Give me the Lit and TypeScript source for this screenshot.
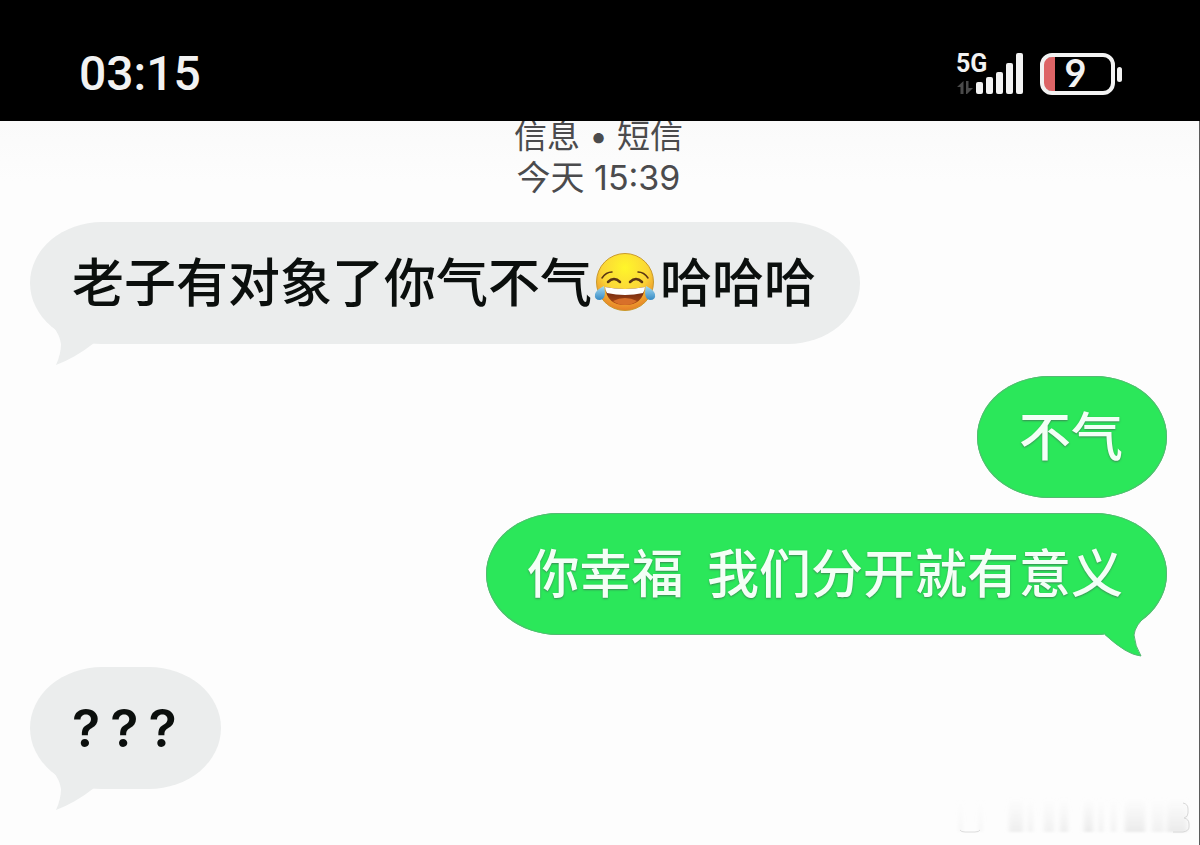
import { LitElement, html, css, svg } from "lit";
import { customElement, property } from "lit/decorators.js";

@customElement("status-bar")
class StatusBar extends LitElement {
  static styles = css`
    :host {
      display: flex;
      align-items: center;
      justify-content: space-between;
      box-sizing: border-box;
      padding: 26px 77px 0 79px;
      height: 121px;
      background: #000;
      color: #f2f2f2;
      font-family: Roboto, sans-serif;
    }
    .time {
      font-size: 48px;
      font-weight: 500;
      line-height: 56px;
    }
    .status {
      display: flex;
      align-items: center;
      gap: 16px;
    }
    .signal {
      display: grid;
      grid-template-columns: 20px 48px;
    }
    .net {
      grid-area: 1 / 1;
      font-size: 25px;
      font-weight: 700;
      line-height: 22px;
    }
    .bars {
      grid-area: 1 / 1 / 2 / 3;
      display: block;
    }
    .battery {
      display: grid;
      align-items: center;
    }
    .battery svg {
      grid-area: 1 / 1;
      display: block;
    }
    .level {
      grid-area: 1 / 1;
      padding: 0 12px 4px 0;
      text-align: center;
      font-family: Lato, sans-serif;
      font-size: 38px;
      font-weight: 700;
      line-height: 38px;
    }
  `;
  render() {
    return html`
      <span class="time">03:15</span>
      <div class="status">
        <div class="signal">
          <svg class="bars" width="68" height="42" viewBox="0 0 68 42" fill="#f2f2f2" aria-hidden="true">
            <g fill="#4a4a4a">
              <path d="M7.500 28v13h-3v-7H1z" />
              <path d="M10 28h2.500v7H17l-6 6h-1z" />
            </g>
            <rect x="20" y="29" width="7" height="12" rx="2" />
            <rect x="30" y="24" width="7" height="17" rx="2" />
            <rect x="40" y="19" width="7" height="22" rx="2" />
            <rect x="50" y="10" width="7" height="31" rx="2" />
            <rect x="60" y="0" width="7" height="41" rx="2" />
          </svg>
          <span class="net">5G</span>
        </div>
        <div class="battery">
          <svg width="83" height="42" viewBox="0 0 83 42" aria-hidden="true">
            <path d="M15 4V38H11a8 8 0 0 1-8-8V12a8 8 0 0 1 8-8z" fill="#dd6466" />
            <rect x="2" y="2" width="71" height="38" rx="10" fill="none" stroke="#f2f2f2" stroke-width="4" />
            <rect x="77" y="14" width="5" height="15" rx="2.500" fill="#f2f2f2" />
          </svg>
          <span class="level">9</span>
        </div>
      </div>
    `;
  }
}

@customElement("joy-emoji")
class JoyEmoji extends LitElement {
  static styles = css`
    :host {
      display: block;
      padding: 4px 4px 0 2px;
    }
    svg {
      display: block;
    }
  `;
  render() {
    return html`
      <svg width="62" height="60" viewBox="0 0 62 60" role="img" aria-label="😂">
        <defs>
          <radialGradient id="face" cx="0.5" cy="0.25" r="0.75">
            <stop offset="0" stop-color="#fff62a" />
            <stop offset="0.550" stop-color="#fbd637" />
            <stop offset="1" stop-color="#e67d28" />
          </radialGradient>
          <linearGradient id="mouth" x1="0" y1="0" x2="0" y2="1">
            <stop offset="0" stop-color="#5c1e10" />
            <stop offset="1" stop-color="#b04c14" />
          </linearGradient>
          <linearGradient id="tear" x1="0" y1="0" x2="0" y2="1">
            <stop offset="0" stop-color="#a5dcf4" />
            <stop offset="1" stop-color="#3589c2" />
          </linearGradient>
        </defs>
        <circle cx="31" cy="30" r="28.500" fill="url(#face)" stroke="#c99a2c" stroke-width="1" />
        <g fill="none" stroke="#5a3514" stroke-linecap="round">
          <path d="M8 26Q12 20 18 20" stroke-width="1.500" />
          <path d="M54 26Q50 20 44 20" stroke-width="1.500" />
          <path d="M14 30Q20 24 26 30" stroke-width="2.500" />
          <path d="M36 30Q42 24 48 30" stroke-width="2.500" />
        </g>
        <path d="M11 35Q31 39 51 35Q49 53 31 53Q13 53 11 35z" fill="url(#mouth)" />
        <path d="M11 35Q31 39 51 35Q51 38 49 41Q31 45 13 41Q11 38 11 35z" fill="#fff" />
        <path d="M19 49Q31 43 43 49Q38 53 31 53Q24 53 19 49z" fill="#d8702a" />
        <path d="M10 34Q13 47 6 48Q0 48 1 42Q3 37 10 34z" fill="url(#tear)" />
        <path d="M52 34Q49 47 56 48Q62 48 61 42Q59 37 52 34z" fill="url(#tear)" />
      </svg>
    `;
  }
}

@customElement("chat-bubble")
class ChatBubble extends LitElement {
  @property({ type: Boolean, reflect: true }) mine = false;
  @property({ type: Boolean }) tail = false;

  static styles = css`
    :host {
      display: block;
      position: relative;
      align-self: flex-start;
      color: #0b0f0d;
    }
    :host([mine]) {
      align-self: flex-end;
      color: #f3fff6;
    }
    .body {
      display: flex;
      align-items: center;
      box-sizing: border-box;
      min-height: 122px;
      padding: 24px 44px 30px 42px;
      border-radius: 72px / 61px;
      background: #ebeded;
      font-family: "Noto Sans CJK SC", sans-serif;
      font-size: 52px;
      font-weight: 500;
      line-height: 60px;
    }
    :host([mine]) .body {
      background: #2be75a;
      box-shadow: inset 0 0 0 1px #56b873;
      text-shadow: 0 1px 2px #3c8a55;
    }
    .tail {
      position: absolute;
      top: 94px;
      left: 10px;
      fill: #ebeded;
    }
    :host([mine]) .tail {
      left: auto;
      right: 10px;
      fill: #2be75a;
    }
  `;
  render() {
    const shape = this.mine
      ? svg`<path d="M54 8Q42 18 41 28Q42 39 48 49Q34 48 12 28V0H54z" />
            <path d="M54 8Q42 18 41 28Q42 39 48 49Q34 48 12 27.500" fill="none" stroke="#56b873" />`
      : svg`<path d="M12 9Q20 19 21 28Q21 38 16 49Q35 42 54 27V0H12z" />`;
    return html`
      <div class="body"><slot></slot></div>
      ${this.tail
        ? html`<svg class="tail" width="64" height="52" viewBox="0 0 64 52" aria-hidden="true">${shape}</svg>`
        : null}
    `;
  }
}

@customElement("app-root")
class AppRoot extends LitElement {
  static styles = css`
    :host {
      display: flex;
      flex-direction: column;
      min-height: 100vh;
      background: #fdfdfd;
      font-family: Inter, "Noto Sans CJK SC", sans-serif;
    }
    .thread {
      position: relative;
      flex: 1;
      display: flex;
      flex-direction: column;
      overflow: hidden;
      padding: 0 32px 33px 30px;
      border-right: 1px solid #5c5c5c;
      background: linear-gradient(#fafafa, #fdfdfd 60px);
    }
    .meta {
      margin: -6px 0 23px;
      text-align: center;
      color: #4b4b4d;
      font-size: 33px;
      line-height: 42px;
    }
    .meta p {
      margin: 0;
    }
    .meta .when {
      font-size: 34px;
    }
    .log {
      display: flex;
      flex-direction: column;
      gap: 32px;
    }
    .group {
      display: flex;
      flex-direction: column;
      gap: 15px;
    }
    .marks {
      display: flex;
      gap: 10px;
      padding-top: 8px;
      font-family: Inter, sans-serif;
      font-weight: 600;
    }
    .watermark {
      position: absolute;
      right: 8px;
      bottom: 8px;
    }
  `;
  render() {
    const streaks = [
      [4, 3, 0.3], [24, 3, 0.3], [54, 14, 0.5], [73, 5, 0.4], [89, 10, 0.4], [105, 8, 0.5],
      [129, 9, 0.6], [144, 4, 0.5], [156, 5, 0.4], [170, 20, 0.6], [197, 12, 0.4], [212, 20, 0.6],
    ];
    return html`
      <status-bar></status-bar>
      <main class="thread">
        <header class="meta">
          <p>信息 • 短信</p>
          <p class="when">今天 15:39</p>
        </header>
        <div class="log">
          <chat-bubble tail>老子有对象了你气不气<joy-emoji></joy-emoji>哈哈哈</chat-bubble>
          <div class="group">
            <chat-bubble mine>不气</chat-bubble>
            <chat-bubble mine tail>你幸福&nbsp; 我们分开就有意义</chat-bubble>
          </div>
          <chat-bubble tail><span class="marks"><span>?</span><span>?</span><span>?</span></span></chat-bubble>
        </div>
        <svg class="watermark" width="236" height="42" viewBox="0 0 236 42" aria-hidden="true">
          <defs>
            <linearGradient id="streak" x1="0" y1="0" x2="0" y2="1">
              <stop offset="0" stop-color="#e6e6e6" stop-opacity="0" />
              <stop offset="1" stop-color="#dedede" />
            </linearGradient>
            <filter id="soft"><feGaussianBlur stdDeviation="2 1" /></filter>
          </defs>
          <g filter="url(#soft)">
            ${streaks.map(([x, w, o]) => svg`<rect x=${x} y="3" width=${w} height="34" fill="url(#streak)" opacity=${o} />`)}
          </g>
          <path d="M5 35Q6 37 10 37H20Q24 37 25 35" fill="none" stroke="#dcdcdc" />
          <path d="M228 8Q233 9 233 14V18Q233 22 229 23Q234 24 234 29V32Q234 36 228 37H218" fill="none" stroke="#d8d8d8" />
        </svg>
      </main>
    `;
  }
}
